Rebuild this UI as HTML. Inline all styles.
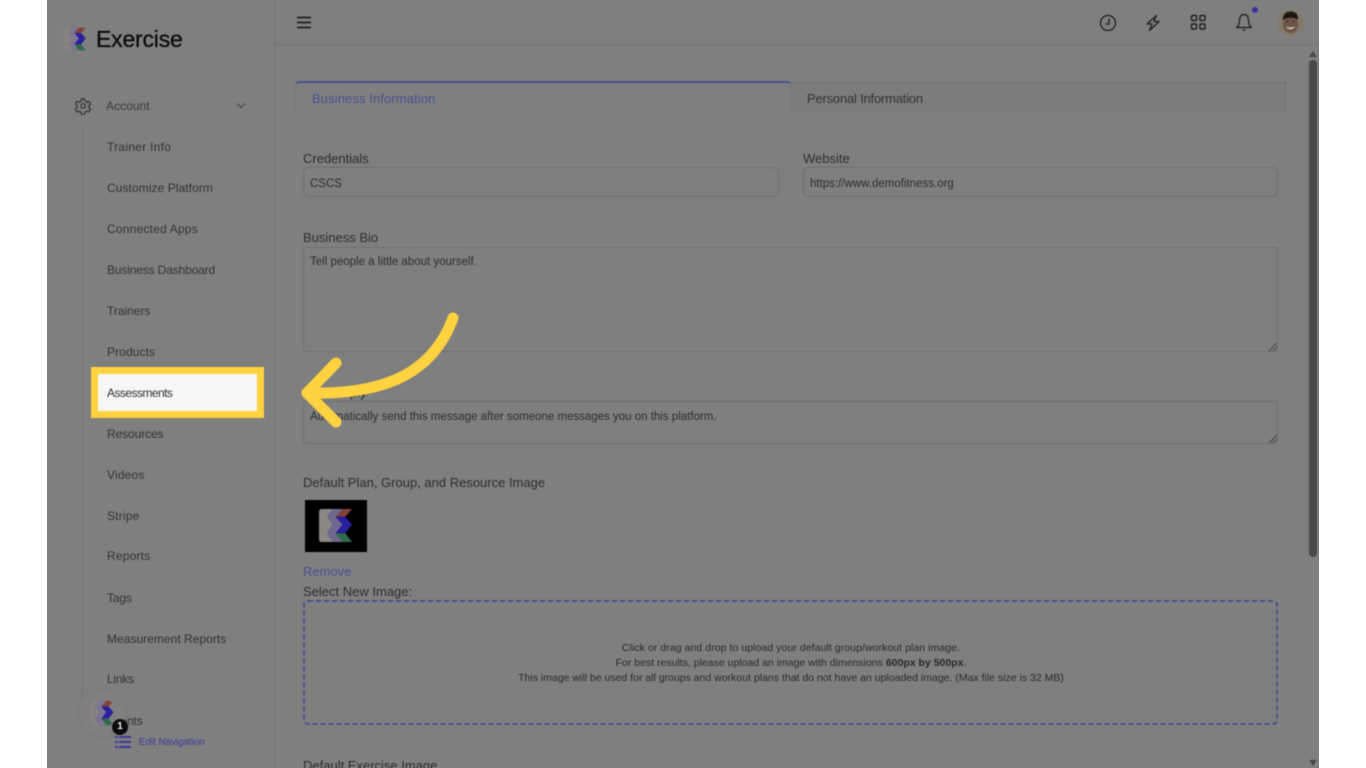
<!DOCTYPE html>
<html>
<head>
<meta charset="utf-8">
<style>
html,body{margin:0;padding:0;background:#fff;width:1366px;height:768px;overflow:hidden}
body{font-family:"Liberation Sans",sans-serif;position:relative}
#p{position:absolute;left:47px;top:0;width:1272px;height:768px;background:#7f7f7f;overflow:hidden}
#w{position:absolute;left:0;top:0;width:1272px;height:768px;filter:blur(.45px)}
.a{position:absolute;white-space:nowrap}
.n{position:absolute;left:60px;font-size:12px;color:#333338;line-height:14px;white-space:nowrap}
.l{position:absolute;font-size:13px;color:#2e2e2e;line-height:15px;white-space:nowrap}
.b{position:absolute;border:1px solid #6f6f6f;border-radius:5px;box-sizing:border-box;font-size:11.5px;color:#2e2e2e;padding-left:6px;white-space:nowrap}
.c{position:absolute;left:257px;width:974px;text-align:center;font-size:10.5px;line-height:15px;color:#2a2a2a;white-space:nowrap}
</style>
</head>
<body>
<div id="p"><div id="w">
  <div class="a" style="left:227px;top:0;width:1px;height:768px;background:#737373"></div>
  <div class="a" style="left:228px;top:44px;width:1044px;height:1px;background:#737373"></div>
  <div class="a" style="left:35px;top:127px;width:1px;height:573px;background:#737373"></div>

  <svg class="a" style="left:16px;top:27px" width="24" height="24" viewBox="0 0 36 36">
    <path d="M14 1H34L27 9H8Z" fill="#84403a"/>
    <path d="M8 9H27L34 17L27 26H8Z" fill="#2a1f9c"/>
    <path d="M8 26H27L34 35H14Z" fill="#2f6a4a"/>
    <path d="M6 1H24L17 9L24 17L17 26L24 35H6Z" fill="#7b7592"/>
    <path d="M3 1H14L8 9L14 17L8 26L14 35H3Q0 35 0 32V4Q0 1 3 1Z" fill="#868382"/>
  </svg>
  <div class="a" style="left:49px;top:26px;font-size:23px;line-height:27px;color:#0c0c0c;letter-spacing:-.2px;-webkit-text-stroke:.3px #0c0c0c">Exercise</div>

  <svg class="a" style="left:27px;top:97px" width="18" height="18" viewBox="0 0 24 24" fill="none" stroke="#333" stroke-width="1.6">
    <circle cx="12" cy="12" r="3"/>
    <path d="M10 2.500h4l.6 3 2.600 1.500 2.900-1 2 3.500-2.300 2v3l2.300 2-2 3.500-2.900-1-2.600 1.500-.6 3h-4l-.6-3-2.600-1.500-2.900 1-2-3.500 2.300-2v-3l-2.300-2 2-3.500 2.900 1 2.600-1.500z" stroke-linejoin="round"/>
  </svg>
  <div class="n" style="left:59px;top:99px;color:#3a3a40;letter-spacing:.06px">Account</div>
  <svg class="a" style="left:189px;top:102px" width="10" height="7" viewBox="0 0 10 7" fill="none" stroke="#444" stroke-width="1"><path d="M1 1.500l4 4 4-4"/></svg>

  <div class="n" style="top:140px;letter-spacing:.27px">Trainer Info</div>
  <div class="n" style="top:181px;letter-spacing:.07px">Customize Platform</div>
  <div class="n" style="top:222px;letter-spacing:.2px">Connected Apps</div>
  <div class="n" style="top:263px;letter-spacing:-.15px">Business Dashboard</div>
  <div class="n" style="top:304px;letter-spacing:-.03px">Trainers</div>
  <div class="n" style="top:345px;letter-spacing:.1px">Products</div>
  <div class="a" style="left:44px;top:367px;width:173px;height:51px;background:#f6f6f6;border:7px solid #ffd23f;box-sizing:border-box"></div>
  <div class="n" style="top:386px;letter-spacing:-.55px">Assessments</div>
  <div class="n" style="top:427px;letter-spacing:-.1px">Resources</div>
  <div class="n" style="top:468px;letter-spacing:.18px">Videos</div>
  <div class="n" style="top:509px;letter-spacing:.18px">Stripe</div>
  <div class="n" style="top:549px;letter-spacing:.2px">Reports</div>
  <div class="n" style="top:591px;letter-spacing:-.15px">Tags</div>
  <div class="n" style="top:632px;letter-spacing:.03px">Measurement Reports</div>
  <div class="n" style="top:672px;letter-spacing:-.25px">Links</div>
  <div class="n" style="top:714px;letter-spacing:-.2px">Events</div>

  <div class="a" style="left:32px;top:690px;width:47px;height:47px;border-radius:50%;background:#7f7f7f;box-shadow:0 0 3px #747474"></div>
  <svg class="a" style="left:42px;top:700px;clip-path:circle(56%)" width="26" height="26" viewBox="0 0 36 36">
    <path d="M14 1H34L27 9H8Z" fill="#84403a"/>
    <path d="M8 9H27L34 17L27 26H8Z" fill="#2a1f9c"/>
    <path d="M8 26H27L34 35H14Z" fill="#2f6a4a"/>
    <path d="M6 1H24L17 9L24 17L17 26L24 35H6Z" fill="#7b7592"/>
    <path d="M3 1H14L8 9L14 17L8 26L14 35H3Q0 35 0 32V4Q0 1 3 1Z" fill="#868382"/>
  </svg>
  <div class="a" style="left:65px;top:719px;width:16px;height:16px;border-radius:50%;background:#0c0c0c;color:#eee;font-size:10px;font-weight:bold;line-height:16px;text-align:center">1</div>
  <svg class="a" style="left:68px;top:735px" width="16" height="14" viewBox="0 0 16 14" fill="#3f3a9a">
    <rect x="0" y="1" width="3" height="2"/><rect x="4" y="1" width="12" height="2"/>
    <rect x="0" y="6" width="3" height="2"/><rect x="4" y="6" width="12" height="2"/>
    <rect x="0" y="11" width="3" height="2"/><rect x="4" y="11" width="12" height="2"/>
  </svg>
  <div class="a" style="left:92px;top:736px;font-size:10px;line-height:12px;color:#3f3a9a;letter-spacing:-.1px;margin-top:1px">Edit Navigation</div>

  <svg class="a" style="left:249px;top:15px" width="16" height="15" viewBox="0 0 16 15" fill="none" stroke="#1f1f1f" stroke-width="1.7"><path d="M1 2.500h14M1 7.500h14M1 12.500h14"/></svg>
  <svg class="a" style="left:1052px;top:14px" width="18" height="18" viewBox="0 0 18 18" fill="none" stroke="#1f1f1f" stroke-width="1.3"><circle cx="9" cy="9" r="7.500"/><path d="M10 4.500V10H6.500"/></svg>
  <svg class="a" style="left:1097px;top:14px" width="18" height="18" viewBox="0 0 18 18" fill="none" stroke="#1f1f1f" stroke-width="1.3" stroke-linejoin="round"><path d="M12.500 1.500L3 10h5l-2.500 6.500L15 7.500h-5.200z"/></svg>
  <svg class="a" style="left:1143px;top:14px" width="17" height="17" viewBox="0 0 17 17" fill="none" stroke="#1f1f1f" stroke-width="1.4"><rect x="1.500" y="1.500" width="5" height="5" rx="1"/><rect x="10" y="1.500" width="5" height="5" rx="1"/><rect x="1.500" y="10" width="5" height="5" rx="1"/><rect x="10" y="10" width="5" height="5" rx="1"/></svg>
  <svg class="a" style="left:1188px;top:13px" width="18" height="19" viewBox="0 0 18 19" fill="none" stroke="#1f1f1f" stroke-width="1.3" stroke-linejoin="round"><path d="M9 1.500C5.500 1.500 4.500 4.500 4.500 7.500c0 3.500-1 5.500-3 7h15c-2-1.500-3-3.500-3-7 0-3-1-6-4.500-6z"/><path d="M7.500 17h3"/></svg>
  <div class="a" style="left:1205px;top:7px;width:6px;height:6px;border-radius:50%;background:#3a32a8"></div>
  <svg class="a" style="left:1230px;top:9px" width="27" height="27" viewBox="0 0 27 27">
    <circle cx="13.500" cy="13.500" r="13" fill="#83796a"/>
    <ellipse cx="13.500" cy="15" rx="7.500" ry="9.500" fill="#6e5548"/>
    <path d="M6 11C5.500 4.500 10 2.500 14 2.500S21.500 5 21 11C19 8 9 8 6 11Z" fill="#1a1715"/>
    <path d="M9.500 12.500h2M15.500 12.500h2" stroke="#2a2320" stroke-width="1"/>
    <path d="M8.500 17.500Q13.500 23 18.500 17.500Q13.500 19.500 8.500 17.500Z" fill="#cfc8c0"/>
  </svg>

  <div class="a" style="left:1262px;top:51px;width:0;height:0;border-left:4px solid transparent;border-right:4px solid transparent;border-bottom:6px solid #484848"></div>
  <div class="a" style="left:1262px;top:60px;width:8px;height:497px;border-radius:4px;background:#484848"></div>
  <div class="a" style="left:1262px;top:760px;width:0;height:0;border-left:4px solid transparent;border-right:4px solid transparent;border-top:6px solid #484848"></div>

  <div class="a" style="left:744px;top:82px;width:495px;height:29px;border:1px solid #737373;border-bottom:0;border-left:0;box-sizing:border-box;background:#7c7c7c"></div>
  <div class="a" style="left:248px;top:81px;width:497px;height:30px;box-sizing:border-box;border-top:2px solid #47528f;border-left:1px solid #737373;border-right:1px solid #737373;border-radius:5px 5px 0 0;background:#7f7f7f"></div>
  <div class="a" style="left:265px;top:91px;font-size:13px;line-height:15px;color:#47528f;letter-spacing:.1px">Business Information</div>
  <div class="a" style="left:760px;top:91px;font-size:13px;line-height:15px;color:#333;letter-spacing:-.2px">Personal Information</div>

  <div class="l" style="left:256px;top:151px">Credentials</div>
  <div class="b" style="left:256px;top:167px;width:476px;height:30px;line-height:30px;padding-top:1px">CSCS</div>
  <div class="l" style="left:756px;top:151px">Website</div>
  <div class="b" style="left:756px;top:167px;width:475px;height:30px;line-height:30px;padding-top:1px">https://www.demofitness.org</div>

  <div class="l" style="left:256px;top:230px">Business Bio</div>
  <div class="b" style="left:256px;top:247px;width:975px;height:105px;line-height:14px;padding-top:7px;border-radius:2px">Tell people a little about yourself.</div>
  <div class="l" style="left:256px;top:385px">Auto Reply</div>
  <div class="b" style="left:256px;top:401px;width:975px;height:43px;line-height:14px;padding-top:8px;border-radius:2px">Automatically send this message after someone messages you on this platform.</div>
  <svg class="a" style="left:1222px;top:343px" width="8" height="8" viewBox="0 0 8 8" stroke="#444" stroke-width="1"><path d="M0 8L8 0M4 8L8 4"/></svg>
  <svg class="a" style="left:1222px;top:435px" width="8" height="8" viewBox="0 0 8 8" stroke="#444" stroke-width="1"><path d="M0 8L8 0M4 8L8 4"/></svg>

  <div class="l" style="left:256px;top:475px">Default Plan, Group, and Resource Image</div>
  <div class="a" style="left:258px;top:500px;width:62px;height:52px;background:#000"></div>
  <svg class="a" style="left:272px;top:508px" width="35" height="35" viewBox="0 0 36 36">
    <path d="M14 1H34L27 9H8Z" fill="#84403a"/>
    <path d="M8 9H27L34 17L27 26H8Z" fill="#2a1f9c"/>
    <path d="M8 26H27L34 35H14Z" fill="#2f6a4a"/>
    <path d="M6 1H24L17 9L24 17L17 26L24 35H6Z" fill="#6e6890"/>
    <path d="M3 1H14L8 9L14 17L8 26L14 35H3Q0 35 0 32V4Q0 1 3 1Z" fill="#8b8784"/>
  </svg>
  <div class="a" style="left:256px;top:564px;font-size:13px;line-height:15px;color:#47528f">Remove</div>
  <div class="l" style="left:256px;top:584px">Select New Image:</div>

  <svg class="a" style="left:256px;top:600px" width="975" height="125"><rect x="1" y="1" width="973" height="123" rx="4" fill="none" stroke="#47528f" stroke-width="2" stroke-dasharray="5 3"/></svg>
  <div class="c" style="top:641px;letter-spacing:.06px">Click or drag and drop to upload your default group/workout plan image.</div>
  <div class="c" style="top:656px">For best results, please upload an image with dimensions <b>600px by 500px</b>.</div>
  <div class="c" style="top:671px">This image will be used for all groups and workout plans that do not have an uploaded image. (Max file size is 32 MB)</div>

  <div class="l" style="left:256px;top:758px">Default Exercise Image</div>

  <svg class="a" style="left:250px;top:310px" width="170" height="120" viewBox="0 0 170 120" fill="none" stroke="#ffd23f" stroke-width="11" stroke-linecap="round" stroke-linejoin="round">
    <path d="M156 8C135 65 85 85 10 83"/>
    <path d="M39 53L10 83L39 112"/>
  </svg>
</div></div>
</body>
</html>
